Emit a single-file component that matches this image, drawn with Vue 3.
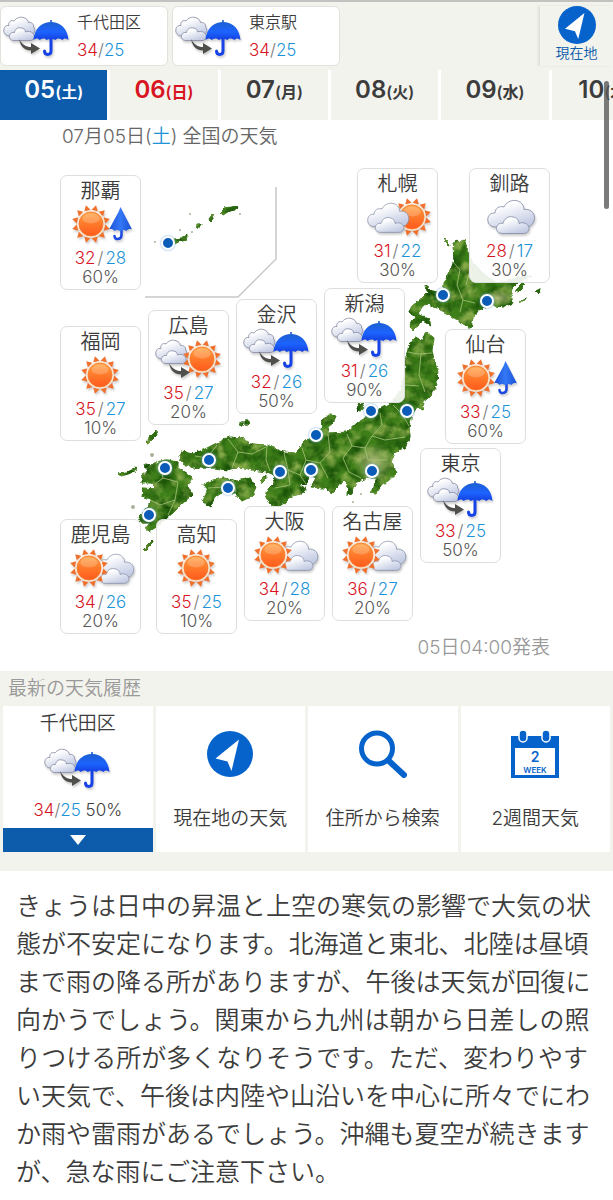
<script setup>
import { ref } from "vue";

const places = [
  { name: "千代田区", high: 34, low: 25 },
  { name: "東京駅", high: 34, low: 25 },
];

const days = [
  { date: "05", week: "土" },
  { date: "06", week: "日", holiday: true },
  { date: "07", week: "月" },
  { date: "08", week: "火" },
  { date: "09", week: "水" },
  { date: "10", week: "木" },
];

const selected = ref("05");

// x, y : top left corner of the card on the map
const cities = [
  { name: "那覇", icon: "sun-rain", high: 32, low: 28, rain: 60, x: 0, y: 25 },
  { name: "福岡", icon: "sunny", high: 35, low: 27, rain: 10, x: 0, y: 176 },
  { name: "広島", icon: "cloud-to-sun", high: 35, low: 27, rain: 20, x: 88, y: 160 },
  { name: "金沢", icon: "cloud-to-rain", high: 32, low: 26, rain: 50, x: 176, y: 149 },
  { name: "新潟", icon: "cloud-to-rain", high: 31, low: 26, rain: 90, x: 264, y: 138 },
  { name: "札幌", icon: "cloud-sun", high: 31, low: 22, rain: 30, x: 297, y: 18 },
  { name: "釧路", icon: "cloudy", high: 28, low: 17, rain: 30, x: 409, y: 18 },
  { name: "仙台", icon: "sun-rain", high: 33, low: 25, rain: 60, x: 385, y: 179 },
  { name: "東京", icon: "cloud-to-rain", high: 33, low: 25, rain: 50, x: 360, y: 298 },
  { name: "鹿児島", icon: "sun-cloud", high: 34, low: 26, rain: 20, x: 0, y: 369 },
  { name: "高知", icon: "sunny", high: 35, low: 25, rain: 10, x: 96, y: 369 },
  { name: "大阪", icon: "sun-cloud", high: 34, low: 28, rain: 20, x: 184, y: 356 },
  { name: "名古屋", icon: "sun-cloud", high: 36, low: 27, rain: 20, x: 272, y: 356 },
];

const markers = [
  [168, 243],
  [443, 295],
  [487, 301],
  [371, 411],
  [407, 411],
  [316, 435],
  [372, 471],
  [311, 470],
  [280, 472],
  [209, 460],
  [165, 468],
  [228, 488],
  [149, 515],
];

const rays = [0, 30, 60, 90, 120, 150, 180, 210, 240, 270, 300, 330];
</script>

<template>
  <svg class="sprite" aria-hidden="true">
    <defs>
      <linearGradient id="cloudFill" x1="0" y1="0" x2="0.6" y2="1">
        <stop offset="0.3" stop-color="#ffffff" />
        <stop offset="1" stop-color="#c4cce4" />
      </linearGradient>
      <linearGradient id="sunFill" x1="0" y1="0" x2="0" y2="1">
        <stop offset="0" stop-color="#ffa84a" />
        <stop offset="0.45" stop-color="#ff7d2c" />
        <stop offset="1" stop-color="#ff5a1c" />
      </linearGradient>
      <linearGradient id="umbrellaFill" x1="0" y1="0" x2="0" y2="1">
        <stop offset="0" stop-color="#1c5fc8" />
        <stop offset="0.6" stop-color="#1d63ff" />
        <stop offset="1" stop-color="#1340e0" />
      </linearGradient>
      <linearGradient id="foldedFill" x1="0" y1="0" x2="1" y2="0">
        <stop offset="0" stop-color="#1c50d8" />
        <stop offset="0.5" stop-color="#3478f5" />
        <stop offset="1" stop-color="#1a4fd6" />
      </linearGradient>
      <g id="cloud" fill="url(#cloudFill)" stroke="#8089a3" stroke-width="0.8">
        <path
          d="M9 28C3 28 0.5 24 0.8 20C1.2 16 4 13.5 8 14C8 9.500 12 6.500 17 8C19 3.500 24 0.800 29 1.500C34 2.500 37 6 37 10.500C43 9.500 47.500 13.500 47.500 18.500C47.500 24 44 28 38 28Z"
        />
        <path
          d="M16 34.500C11 34.500 9 31.500 9.500 28.500C10 25.500 13 23.500 16 24.500C17 19.500 22 16.500 26 18C30 18.500 32 21.500 32 24.500C36 22.500 41 24.500 42 28.500C42.500 32 40 34.500 36 34.500Z"
        />
      </g>
      <g id="small-cloud" fill="url(#cloudFill)" stroke="#8388a0" stroke-width="0.8">
        <path
          d="M7 20C3 20 0.500 17 0.800 14C1 11 3 9 6 9.500C5 6 8 3.500 11 5C13 2 17 0.500 20 1.500C23 2 25 4 25.500 6.500C29 6 31 8.500 30.500 11C33 13 32 18 28 19Z"
        />
        <path
          d="M11 24.500C7.500 24.500 6 22 6.500 19.500C7 17.500 9 16 11.500 16.500C12 13 15 11 18 12C21 12 22.500 14 22.500 16C26 14.500 30 16 31 19C32 22 30 24.500 27 24.500Z"
        />
      </g>
      <g id="sun">
        <path
          v-for="deg in rays"
          :key="deg"
          d="M-3.200 -14L0 -19.500L3.200 -14Z"
          fill="#f0702c"
          :transform="`rotate(${deg + 15})`"
        />
        <circle r="13.500" fill="#ffe6c8" />
        <circle r="12" fill="url(#sunFill)" stroke="#f47a35" stroke-width="0.8" />
        <ellipse cy="-5.500" rx="8.500" ry="5" fill="#fff" opacity="0.2" />
      </g>
      <g id="umbrella">
        <path
          d="M18 18V31C18 35.500 11.500 35.500 11.500 31"
          fill="none"
          stroke="#1743e6"
          stroke-width="3"
          stroke-linecap="round"
        />
        <path
          d="M17.200 0H18.800V2C28 2.500 34.500 9 35.500 20C33.500 18 31 18 29.500 20C27 18 24 18 22.500 20C20 18.500 16 18.500 13.500 20C12 18 9 18 6.500 20C5 18 2.500 18 0.500 20C1.500 9 8 2.500 17.200 2Z"
          fill="url(#umbrellaFill)"
        />
      </g>
      <g id="folded">
        <path
          d="M12.500 21V28C12.500 33 5.500 33.500 5.500 29"
          fill="none"
          stroke="#1c4ade"
          stroke-width="2.500"
          stroke-linecap="round"
        />
        <path
          d="M11.500 0L14 5L23 22.500C21 21.500 19 22 17.500 24C15 22.500 12.500 22.500 11.500 24.500C9.500 22.500 7 22.500 5.500 24C4 22 2 21.500 0 22.500L9.500 5Z"
          fill="url(#foldedFill)"
        />
      </g>
      <path
        id="arrow"
        d="M0 0C3 5.500 7 8 12 8V4L21 9.500L12 15V11.500C6 11.500 1.500 8 0 0Z"
        fill="#4f4f4c"
      />
      <symbol id="sunny" viewBox="0 0 68 40">
        <use href="#sun" x="33" y="20" />
      </symbol>
      <symbol id="cloudy" viewBox="0 0 68 40">
        <use href="#cloud" x="11" y="2" />
      </symbol>
      <symbol id="sun-rain" viewBox="0 0 68 40">
        <use href="#sun" x="24" y="20" />
        <use href="#folded" x="42" y="3" />
      </symbol>
      <symbol id="sun-cloud" viewBox="0 0 68 40">
        <use href="#cloud" transform="translate(25 5) scale(0.88)" />
        <use href="#sun" x="22" y="20" />
      </symbol>
      <symbol id="cloud-sun" viewBox="0 0 68 40">
        <use href="#sun" x="48" y="20" />
        <use href="#cloud" transform="translate(3 5) scale(0.88)" />
      </symbol>
      <symbol id="cloud-to-sun" viewBox="0 0 68 40">
        <use href="#small-cloud" x="0" y="0" />
        <use href="#sun" x="47" y="20" />
        <use href="#arrow" x="14" y="24" />
      </symbol>
      <symbol id="cloud-to-rain" viewBox="0 0 68 40">
        <use href="#small-cloud" x="0" y="0" />
        <use href="#umbrella" x="30" y="4" />
        <use href="#arrow" x="16" y="23" />
      </symbol>
      <symbol id="compass" viewBox="0 0 46 46">
        <circle cx="23" cy="23" r="23" fill="#0663cc" />
        <path d="M32 8.500L24.500 40L20.500 30.500L8.500 27.500Z" fill="#fff" />
      </symbol>
    </defs>
  </svg>

  <header class="top">
    <a v-for="place in places" :key="place.name" href="#" class="place">
      <svg class="weather"><use href="#cloud-to-rain" /></svg>
      <span class="place-text">
        <span class="place-name">{{ place.name }}</span>
        <span class="temp">
          <span class="high">{{ place.high }}</span
          ><span class="slash">/</span><span class="low">{{ place.low }}</span>
        </span>
      </span>
    </a>
    <button class="here">
      <svg class="here-icon"><use href="#compass" /></svg>
      現在地
    </button>
  </header>

  <nav class="days">
    <button
      v-for="day in days"
      :key="day.date"
      class="day"
      :class="{ active: selected === day.date, holiday: day.holiday }"
      @click="selected = day.date"
    >
      {{ day.date }}<small>({{ day.week }})</small>
    </button>
  </nav>

  <main>
    <section class="japan">
      <h1>07月05日(<span class="low">土</span>) 全国の天気</h1>
      <div class="map">
        <svg class="land" viewBox="60 150 493 486">
          <defs>
            <filter id="terrain" x="0" y="0" width="1" height="1" color-interpolation-filters="sRGB">
              <feTurbulence type="fractalNoise" baseFrequency="0.25" numOctaves="2" seed="4" result="edge" />
              <feDisplacementMap in="SourceGraphic" in2="edge" scale="4" xChannelSelector="R" yChannelSelector="G" result="shape" />
              <feTurbulence type="fractalNoise" baseFrequency="0.08" numOctaves="3" seed="11" result="noise" />
              <feColorMatrix
                in="noise"
                type="matrix"
                values="0 0 0 0 0.55
                        0 0 0 0 0.68
                        0 0 0 0 0.3
                        2.6 0 0 0 -1.2"
                result="light"
              />
              <feColorMatrix
                in="noise"
                type="matrix"
                values="0 0 0 0 0.1
                        0 0 0 0 0.32
                        0 0 0 0 0.03
                        0 2.4 0 0 -0.9"
                result="dark"
              />
              <feComposite in="light" in2="shape" operator="in" result="lightLand" />
              <feComposite in="dark" in2="shape" operator="in" result="darkLand" />
              <feMerge>
                <feMergeNode in="shape" />
                <feMergeNode in="darkLand" />
                <feMergeNode in="lightLand" />
              </feMerge>
            </filter>
            <radialGradient id="plain">
              <stop offset="0" stop-color="#b8bf80" stop-opacity="0.9" />
              <stop offset="1" stop-color="#b8bf80" stop-opacity="0" />
            </radialGradient>
          </defs>
          <path d="M276 187V259L238 297H145" fill="none" stroke="#c8c8c8" stroke-width="1.500" />
          <g filter="url(#terrain)" fill="#3f7f1a" stroke="#3f7f1a">
            <!-- 北海道 -->
            <path
              d="M456 240L453 247L454 260L449 273L444 283L443 293L432 291L425 285L428 292L422 298L412 306L409 312L415 317L410 325L413 331L418 325L423 321L431 326L428 318L420 315L419 308L427 304L437 308L448 314L462 323L471 329L473 317L479 310L488 305L503 307L513 303L511 295L512 288L518 282L532 276L520 277L497 283L485 275L473 263L468 252L464 240L460 243Z"
            />
            <path d="M445 239L448 241L449 246L447 245ZM515 291L523 283L525 285L518 292ZM518 302L526 299L524 302ZM535 291L541 289L539 293Z" />
            <!-- 本州 -->
            <path
              d="M415 338L424 341L423 337L427 332L434 338L432 350L434 360L438 368L437 383L432 395L424 401L423 409L417 407L412 415L409 427L410 437L405 447L394 454L392 463L397 473L388 481L382 484L375 494L370 493L375 483L377 477L370 477L361 480L355 483L353 493L347 495L348 485L343 480L337 488L332 493L325 488L311 487L316 478L310 475L306 484L298 485L306 489L304 493L292 496L287 501L278 507L270 504L266 497L268 489L274 483L275 475L267 472L253 470L240 467L227 470L215 468L203 468L193 468L183 463L179 458L182 451L193 454L203 450L217 443L228 437L242 438L250 444L267 445L283 452L295 453L300 448L305 440L313 438L321 432L322 419L330 415L336 416L333 423L328 427L328 433L347 432L357 423L367 417L380 409L393 402L400 390L405 373L406 357L409 345Z"
            />
            <path d="M357 409L360 403L364 402L362 406L364 408L359 411Z" />
            <!-- 四国 -->
            <path
              d="M204 484L213 480L224 478L237 481L250 478L256 487L252 496L242 501L235 493L223 492L214 498L211 507L203 501L207 491Z"
            />
            <!-- 九州 -->
            <path
              d="M144 464L153 465L160 461L167 460L178 462L178 469L185 472L192 477L188 487L192 495L182 504L175 511L167 518L158 526L150 531L145 529L150 523L142 523L138 517L147 508L151 499L142 496L143 488L157 489L151 483L142 483L142 475L148 471Z"
            />
            <path d="M146 443L150 437L156 431L157 435L151 441L148 444ZM118 474L127 472L136 467L137 470L128 474L121 476ZM144 549L148 544L152 540L153 543L149 547L146 551ZM261 480L266 475L266 479L262 483Z" />
            <path d="M174 239L182 238L187 235L186 240L178 242L175 244ZM209 219L212 215L214 218L211 222ZM220 212L224 208L231 207L237 206L236 210L229 211L223 215Z" />
            <path d="M245 420L249 420L249 424L245 424ZM240 423L243 423L243 426L240 426ZM197 224L201 224L200 227L197 227Z" />
          </g>
          <ellipse cx="374" cy="462" rx="22" ry="19" fill="url(#plain)" />
          <ellipse cx="498" cy="298" rx="16" ry="8" fill="url(#plain)" />
          <g class="borders">
            <path d="M453 262L460 270L457 285L463 300L460 312M463 300L475 303M470 270L466 285" />
            <path d="M408 352L418 354L432 353M421 354L419 375L425 392M405 385L419 386M393 405L402 414L409 426M380 413L382 425L372 436L385 440L405 437M347 434L352 446L365 448L372 436M352 446L343 458L349 472L361 478M365 448L368 460L388 460M328 434L330 452L320 463L328 478M320 463L306 460L302 448M306 460L300 475L306 484M300 475L288 470L284 453M288 470L290 485L275 488M267 446L266 460L270 471M228 439L238 452L252 454L266 447M238 452L232 468M217 445L207 458L195 456" />
            <path d="M208 488L225 487L233 480L236 492M225 487L222 492M160 463L163 478L155 484M163 478L178 482L175 500L160 505L150 500M175 500L168 515" />
          </g>
          <g class="islets">
            <circle cx="192" cy="232" r="1" />
            <circle cx="180" cy="230" r="1" />
            <circle cx="155" cy="242" r="1" />
            <circle cx="190" cy="214" r="1" />
            <circle cx="240" cy="214" r="1" />
            <circle cx="361" cy="494" r="1" />
            <circle cx="353" cy="502" r="1" />
            <circle cx="152" cy="455" r="2" />
            <circle cx="133" cy="507" r="2" />
          </g>
          <g class="markers">
            <circle v-for="([x, y], i) in markers" :key="i" :cx="x" :cy="y" r="6" />
          </g>
        </svg>
        <article
          v-for="city in cities"
          :key="city.name"
          class="city"
          :style="{ left: city.x + 'px', top: city.y + 'px' }"
        >
          <h2>{{ city.name }}</h2>
          <svg class="weather"><use :href="'#' + city.icon" /></svg>
          <p class="temp wide">
            <span class="high">{{ city.high }}</span
            ><span class="slash">/</span><span class="low">{{ city.low }}</span>
          </p>
          <p class="rain">{{ city.rain }}%</p>
        </article>
      </div>
      <p class="published">05日04:00発表</p>
    </section>

    <section class="history">
      <h2>最新の天気履歴</h2>
      <div class="tiles">
        <div class="tile">
          <a href="#" class="latest">
            <span>千代田区</span>
            <svg class="weather"><use href="#cloud-to-rain" /></svg>
            <span class="temp">
              <span class="high">34</span><span class="slash">/</span
              ><span class="low">25</span> 50%
            </span>
          </a>
          <button class="more" aria-label="千代田区">
            <svg viewBox="0 0 16 10"><path d="M0 0H16L8 10Z" fill="#fff" /></svg>
          </button>
        </div>
        <a href="#" class="tile menu">
          <svg class="menu-icon" viewBox="0 0 48 48"><use href="#compass" x="1" y="1" width="46" height="46" /></svg>
          現在地の天気
        </a>
        <a href="#" class="tile menu">
          <svg class="menu-icon" viewBox="0 0 48 48" fill="none" stroke="#0663cc">
            <circle cx="18" cy="18.500" r="15.500" stroke-width="5" />
            <path d="M30 31L45 45" stroke-width="6" stroke-linecap="round" />
          </svg>
          住所から検索
        </a>
        <a href="#" class="tile menu">
          <svg class="menu-icon" viewBox="0 0 48 48" fill="#0663cc">
            <path d="M0 6H48V48H0Z" />
            <path d="M4 18H44V45H4Z" fill="#fff" />
            <rect x="8" y="0" width="8" height="12" rx="4" stroke="#fff" stroke-width="1.500" />
            <rect x="31" y="0" width="8" height="12" rx="4" stroke="#fff" stroke-width="1.500" />
            <text x="24" y="32" class="two">2</text>
            <text x="24" y="43" class="week">WEEK</text>
          </svg>
          2週間天気
        </a>
      </div>
    </section>

    <p class="overview">
      きょうは日中の昇温と上空の寒気の影響で大気の状態が不安定になります。北海道と東北、北陸は昼頃まで雨の降る所がありますが、午後は天気が回復に向かうでしょう。関東から九州は朝から日差しの照りつける所が多くなりそうです。ただ、変わりやすい天気で、午後は内陸や山沿いを中心に所々でにわか雨や雷雨があるでしょう。沖縄も夏空が続きますが、急な雨にご注意下さい。
    </p>
  </main>

  <div class="scrollbar"></div>
</template>

<style>
body {
  margin: 0;
  background: #fff;
  color: #3c3c3c;
  font-family: Inter, "Noto Sans CJK JP", sans-serif;
  font-weight: 350;
  overflow-x: hidden;
}
</style>

<style scoped>
h1,
h2,
p {
  margin: 0;
  font-weight: inherit;
}

a {
  color: inherit;
  text-decoration: none;
}

button {
  padding: 0;
  border: 0;
  font: inherit;
  cursor: pointer;
}

svg {
  display: block;
}

.sprite {
  position: absolute;
  width: 0;
  height: 0;
}

.weather {
  width: 68px;
  height: 40px;
  filter: drop-shadow(1px 2px 1px rgba(0, 0, 0, 0.2));
}

.temp {
  font-size: 17px;
  line-height: 20px;
}

.high {
  color: #d7141f;
}

.low {
  color: #1b93d6;
}

.slash {
  color: #777;
}

.wide .slash {
  margin: 0 2px;
}

.top {
  display: flex;
  gap: 4px;
  padding-top: 4px;
  height: 64px;
  border-top: 2px solid #c2c2c0;
  background: #f3f3ed;
}

.place {
  box-sizing: border-box;
  display: flex;
  align-items: center;
  gap: 6px;
  width: 168px;
  height: 60px;
  padding-left: 2px;
  border: 1px solid #e2e2dd;
  border-radius: 6px;
  background: #fff;
}

.place-text {
  display: flex;
  flex-direction: column;
  gap: 8px;
}

.place-name {
  font-size: 16px;
  line-height: 20px;
}

.here {
  display: flex;
  flex-direction: column;
  align-items: center;
  width: 73px;
  height: 60px;
  margin-left: auto;
  background: #f3f3ed;
  box-shadow: -2px 0 2px rgba(0, 0, 0, 0.08);
  color: #0d5bab;
  font-size: 14px;
  line-height: 18px;
}

.here-icon {
  width: 38px;
  height: 38px;
}

.days {
  display: flex;
  gap: 3px;
  overflow: hidden;
}

.day {
  flex: 0 0 calc(18% - 3px);
  height: 50px;
  padding-bottom: 8px;
  background: #f3f3ed;
  color: #3c3c3c;
  font-size: 24px;
  font-weight: 600;
  line-height: 40px;
  white-space: nowrap;
}

.day small {
  font-size: 16px;
}

.day.holiday {
  color: #d7141f;
}

.day.active {
  background: #0d5bab;
  color: #fff;
}

.japan {
  width: 493px;
  margin: 0 auto;
}

.japan h1 {
  padding: 4px 2px 0;
  color: #666;
  font-size: 19px;
  line-height: 26px;
}

.map {
  position: relative;
  height: 486px;
}

.land {
  width: 100%;
  height: 100%;
}

.borders {
  fill: none;
  stroke: #a9c47c;
  stroke-width: 0.8;
}

.islets {
  fill: #a9b39a;
}

.markers {
  fill: #0a5cb8;
  stroke: #fff;
  stroke-width: 2;
  filter: drop-shadow(0 0 1px #6fa8dc);
}

.city {
  position: absolute;
  box-sizing: border-box;
  display: flex;
  flex-direction: column;
  align-items: center;
  width: 81px;
  height: 115px;
  padding-top: 2px;
  border: 1px solid #dedede;
  border-radius: 7px;
  background: rgba(255, 255, 255, 0.9);
}

.city h2 {
  font-size: 20px;
  line-height: 26px;
}

.city .temp {
  margin-top: 4px;
}

.rain {
  color: #555;
  font-size: 17px;
  line-height: 18px;
}

.published {
  height: 35px;
  padding-right: 3px;
  color: #999;
  font-size: 19px;
  line-height: 24px;
  text-align: right;
}

.history {
  padding: 0 3px 19px;
  background: #f3f3ed;
}

.history h2 {
  padding-left: 5px;
  color: #999;
  font-size: 19px;
  line-height: 35px;
}

.tiles {
  display: grid;
  grid-template-columns: repeat(4, 1fr);
  gap: 3px;
}

.tile {
  display: flex;
  flex-direction: column;
  height: 146px;
  background: #fff;
  font-size: 19px;
  line-height: 24px;
}

.latest {
  flex: 1;
  display: flex;
  flex-direction: column;
  align-items: center;
  gap: 12px;
  padding-top: 6px;
}

.more {
  display: flex;
  align-items: center;
  justify-content: center;
  height: 24px;
  background: #0d5bab;
}

.more svg {
  width: 16px;
  height: 10px;
}

.menu {
  align-items: center;
  gap: 29px;
}

.menu-icon {
  width: 48px;
  height: 48px;
  margin-top: 24px;
}

.two {
  font-size: 14px;
  font-weight: 600;
  text-anchor: middle;
}

.week {
  font-size: 8px;
  font-weight: 600;
  text-anchor: middle;
}

.overview {
  padding: 16px;
  font-size: 25px;
  line-height: 38px;
}

.scrollbar {
  position: fixed;
  top: 81px;
  right: 4px;
  width: 5px;
  height: 128px;
  border-radius: 3px;
  background: rgba(90, 90, 90, 0.8);
}
</style>
